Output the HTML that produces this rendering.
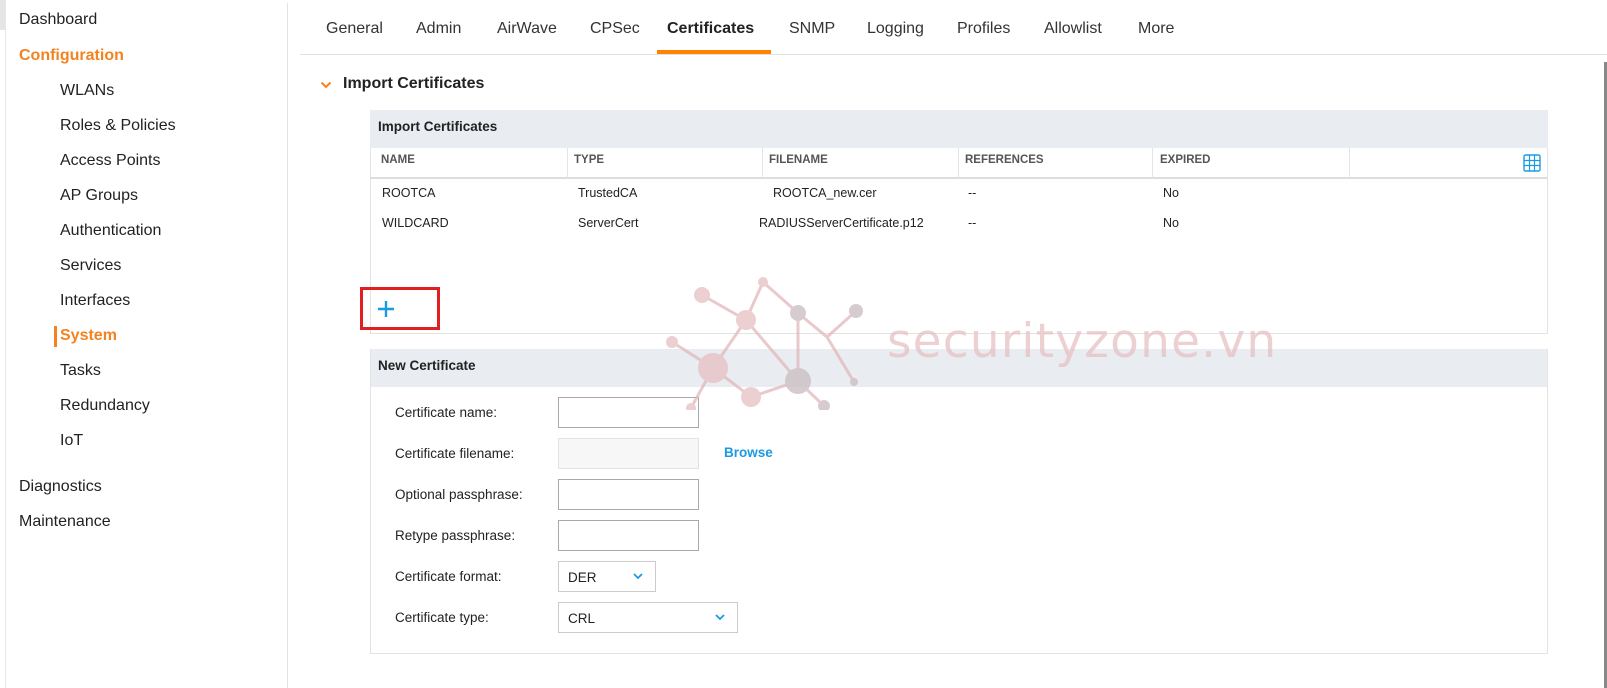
<!DOCTYPE html>
<html><head><meta charset="utf-8"><style>
*{box-sizing:border-box;margin:0;padding:0}
body{width:1607px;height:688px;overflow:hidden;background:#fff;font-family:"Liberation Sans",sans-serif;color:#222;position:relative}
.a{position:absolute;white-space:nowrap}
.side{font-size:16px}
.tab{font-size:16px;top:20px;color:#333}
.th{font-size:11.5px;font-weight:bold;color:#555;top:154px}
.td{font-size:12.5px;color:#222}
.lbl{font-size:13.5px;left:395px;color:#222}
.inp{position:absolute;left:558px;width:141px;height:31px;border:1px solid #aaa;background:#fff}
.sel{position:absolute;height:31px;border:1px solid #ccc;background:#fff;font-size:13.5px;padding:8px 0 0 9px}
.sep{position:absolute;top:148px;width:1px;height:30px;background:#e2e5ea}
</style></head><body>
<div class="a" style="left:0;top:0;width:5px;height:30px;background:#e5e5e5"></div>
<div class="a" style="left:5px;top:0;width:1px;height:688px;background:#e8e8e8"></div>
<div class="a" style="left:287px;top:3px;width:1px;height:685px;background:#e3e3e3"></div>
<div class="a side" style="left:19px;top:11px">Dashboard</div>
<div class="a side" style="left:19px;top:47px;color:#f58220;font-weight:bold">Configuration</div>
<div class="a side" style="left:60px;top:82px">WLANs</div>
<div class="a side" style="left:60px;top:117px">Roles &amp; Policies</div>
<div class="a side" style="left:60px;top:152px">Access Points</div>
<div class="a side" style="left:60px;top:187px">AP Groups</div>
<div class="a side" style="left:60px;top:222px">Authentication</div>
<div class="a side" style="left:60px;top:257px">Services</div>
<div class="a side" style="left:60px;top:292px">Interfaces</div>
<div class="a" style="left:54px;top:326px;width:3px;height:21px;background:#f58220"></div>
<div class="a side" style="left:60px;top:327px;color:#f58220;font-weight:bold">System</div>
<div class="a side" style="left:60px;top:362px">Tasks</div>
<div class="a side" style="left:60px;top:397px">Redundancy</div>
<div class="a side" style="left:60px;top:432px">IoT</div>
<div class="a side" style="left:19px;top:478px">Diagnostics</div>
<div class="a side" style="left:19px;top:513px">Maintenance</div>

<div class="a tab" style="left:326px">General</div>
<div class="a tab" style="left:416px">Admin</div>
<div class="a tab" style="left:497px">AirWave</div>
<div class="a tab" style="left:590px">CPSec</div>
<div class="a tab" style="left:667px;font-weight:bold;color:#222">Certificates</div>
<div class="a tab" style="left:789px">SNMP</div>
<div class="a tab" style="left:867px">Logging</div>
<div class="a tab" style="left:957px">Profiles</div>
<div class="a tab" style="left:1044px">Allowlist</div>
<div class="a tab" style="left:1138px">More</div>
<div class="a" style="left:657px;top:50px;width:114px;height:4px;background:#ff8300"></div>
<div class="a" style="left:300px;top:54px;width:1307px;height:1px;background:#e3e3e3"></div>
<div class="a" style="left:1604px;top:62px;width:3px;height:626px;background:#888"></div>

<svg class="a" style="left:320px;top:80px" width="12" height="10"><path d="M1.5 2.5 L6 7 L10.5 2.5" stroke="#f58220" stroke-width="2" fill="none"/></svg>
<div class="a" style="left:343px;top:75px;font-size:16px;font-weight:bold">Import Certificates</div>

<div class="a" style="left:370px;top:110px;width:1178px;height:224px;border:1px solid #e3e3e3;border-top:none"></div>
<div class="a" style="left:370px;top:110px;width:1178px;height:38px;background:#e9ecf1"></div>
<div class="a" style="left:378px;top:119px;font-size:13.5px;font-weight:bold">Import Certificates</div>
<div class="a" style="left:370px;top:177px;width:1178px;height:2px;background:#ddd"></div>
<div class="sep" style="left:567px"></div><div class="sep" style="left:762px"></div><div class="sep" style="left:958px"></div><div class="sep" style="left:1152px"></div><div class="sep" style="left:1349px"></div>
<div class="a th" style="left:381px">NAME</div>
<div class="a th" style="left:574px">TYPE</div>
<div class="a th" style="left:769px">FILENAME</div>
<div class="a th" style="left:965px">REFERENCES</div>
<div class="a th" style="left:1160px">EXPIRED</div>
<svg class="a" style="left:1523px;top:154px" width="18" height="18"><rect x="1" y="1" width="16" height="16" rx="1.5" fill="none" stroke="#1a9be0" stroke-width="1.4"/><path d="M6.5 1V17M11.5 1V17M1 6.5H17M1 11.5H17" stroke="#1a9be0" stroke-width="1.2"/></svg>
<div class="a td" style="left:382px;top:186px">ROOTCA</div>
<div class="a td" style="left:578px;top:186px">TrustedCA</div>
<div class="a td" style="left:773px;top:186px">ROOTCA_new.cer</div>
<div class="a td" style="left:968px;top:186px">--</div>
<div class="a td" style="left:1163px;top:186px">No</div>
<div class="a td" style="left:382px;top:216px">WILDCARD</div>
<div class="a td" style="left:578px;top:216px">ServerCert</div>
<div class="a td" style="left:759px;top:216px">RADIUSServerCertificate.p12</div>
<div class="a td" style="left:968px;top:216px">--</div>
<div class="a td" style="left:1163px;top:216px">No</div>
<div class="a" style="left:360px;top:287px;width:80px;height:43px;border:3px solid #e02020"></div>
<svg class="a" style="left:377px;top:300px" width="18" height="18"><path d="M9 1V17M1 9H17" stroke="#1a9be0" stroke-width="2.4"/></svg>

<div class="a" style="left:370px;top:349px;width:1178px;height:305px;border:1px solid #e3e3e3"></div>
<div class="a" style="left:371px;top:349px;width:1176px;height:38px;background:#e9ecf1"></div>
<div class="a" style="left:378px;top:358px;font-size:13.5px;font-weight:bold">New Certificate</div>
<div class="a lbl" style="top:405px">Certificate name:</div>
<div class="a lbl" style="top:446px">Certificate filename:</div>
<div class="a lbl" style="top:487px">Optional passphrase:</div>
<div class="a lbl" style="top:528px">Retype passphrase:</div>
<div class="a lbl" style="top:569px">Certificate format:</div>
<div class="a lbl" style="top:610px">Certificate type:</div>
<div class="inp" style="top:397px"></div>
<div class="inp" style="top:438px;background:#f7f7f7;border-color:#e3e3e3"></div>
<div class="inp" style="top:479px"></div>
<div class="inp" style="top:520px"></div>
<div class="a" style="left:724px;top:445px;font-size:13.5px;font-weight:bold;color:#1a9be0">Browse</div>
<div class="sel" style="left:558px;top:561px;width:98px">DER</div>
<svg class="a" style="left:632px;top:572px" width="12" height="8"><path d="M2 2L6 6L10 2" stroke="#1a9be0" stroke-width="1.8" fill="none"/></svg>
<div class="sel" style="left:558px;top:602px;width:180px">CRL</div>
<svg class="a" style="left:714px;top:613px" width="12" height="8"><path d="M2 2L6 6L10 2" stroke="#1a9be0" stroke-width="1.8" fill="none"/></svg>

<svg class="a" style="left:640px;top:260px;opacity:.75" width="700" height="150">
<g stroke-width="3" fill="none">
<path d="M62 35L106 60L123 22L158 53L187 77L216 51M187 77L214 122M158 53V121L111 137L73 108L32 82M106 60L73 108L51 148M106 60L158 121L184 146" stroke="#e2b8bb"/>
</g>
<g fill="#e5bfc2"><circle cx="62" cy="35" r="8"/><circle cx="106" cy="60" r="10"/><circle cx="123" cy="22" r="5"/><circle cx="32" cy="82" r="6"/><circle cx="73" cy="108" r="15"/><circle cx="111" cy="137" r="10"/><circle cx="51" cy="148" r="5"/></g>
<g fill="#c9bcbf"><circle cx="158" cy="53" r="8"/><circle cx="158" cy="121" r="13"/><circle cx="184" cy="146" r="6"/><circle cx="216" cy="51" r="7"/><circle cx="214" cy="122" r="4"/></g>
<text x="247" y="97" font-family="DejaVu Sans,sans-serif" font-size="47" fill="#e7c2c4" letter-spacing="1.2">securityzone.vn</text>
</svg>
</body></html>
